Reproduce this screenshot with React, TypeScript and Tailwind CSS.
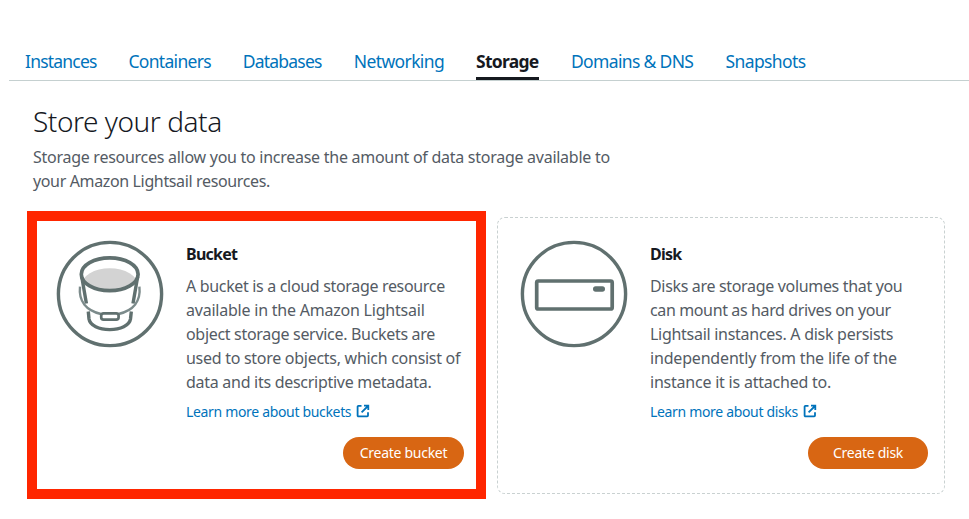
import type { ReactNode } from "react";

type Line = { text: string; tracking: string };

const tabs = [
  { label: "Instances", box: "w-[71.5px] tracking-[-0.8px]" },
  { label: "Containers", box: "w-[82.3px] tracking-[-0.7px]" },
  { label: "Databases", box: "w-[79px] tracking-[-0.8px]" },
  { label: "Networking", box: "w-[90.2px] tracking-[-0.62px]" },
  { label: "Storage", box: "w-[63px] tracking-[-0.72px]", active: true },
  { label: "Domains & DNS", box: "w-[122.6px] tracking-[-0.66px]" },
  { label: "Snapshots", box: "w-[80px] tracking-[-0.62px]" },
];

const bucketLines: Line[] = [
  { text: "A bucket is a cloud storage resource", tracking: "tracking-[-0.33px]" },
  { text: "available in the Amazon Lightsail", tracking: "tracking-[-0.22px]" },
  { text: "object storage service. Buckets are", tracking: "tracking-[-0.31px]" },
  { text: "used to store objects, which consist of", tracking: "tracking-[-0.28px]" },
  { text: "data and its descriptive metadata.", tracking: "tracking-[-0.28px]" },
];

const diskLines: Line[] = [
  { text: "Disks are storage volumes that you", tracking: "tracking-[-0.33px]" },
  { text: "can mount as hard drives on your", tracking: "tracking-[-0.37px]" },
  { text: "Lightsail instances. A disk persists", tracking: "tracking-[-0.28px]" },
  { text: "independently from the life of the", tracking: "tracking-[-0.18px]" },
  { text: "instance it is attached to.", tracking: "tracking-[-0.22px]" },
];

function ExternalIcon() {
  return (
    <svg className="size-[14px] shrink-0 -translate-y-px" viewBox="0 0 14 14" fill="none" stroke="currentColor" strokeWidth="1.8">
      <path d="M5.5 1.9H2.4a.8.8 0 0 0-.8.8v8.8a.8.8 0 0 0 .8.8h8.8a.8.8 0 0 0 .8-.8V8.3M8 1.7h4.3V6M12 2 5.6 8.4" />
    </svg>
  );
}

function BucketIcon() {
  return (
    <svg className="size-[108px] shrink-0" viewBox="0 0 108 108" fill="none" stroke="#60706f" strokeWidth="3.4">
      <clipPath id="rim">
        <ellipse cx="53.7" cy="34.3" rx="28.4" ry="16.7" />
      </clipPath>
      <circle cx="54" cy="54" r="51.6" />
      <ellipse cx="53.7" cy="45" rx="28" ry="16.7" fill="#d3d3d3" stroke="none" clipPath="url(#rim)" />
      <ellipse cx="53.7" cy="34.3" rx="28.4" ry="16.4" strokeWidth="3.7" />
      <path d="M25.8 37 30.4 63.5M81.6 37 77 63.5" />
      <path d="M32.3 71.5 33 79C34 85.5 43 89.6 53.7 89.6S73.500 85.5 74.500 79L75.300 71.500" />
      <path d="M24 46.7C22.5 61 30 70.5 45 74M83.4 46.7C85 61 77.5 70.5 62.5 74" stroke="#7c8b8b" strokeWidth="2.4" />
      <rect x="45.2" y="73.3" width="17.4" height="6.3" rx="2.4" fill="#fff" strokeWidth="2.7" />
    </svg>
  );
}

function DiskIcon() {
  return (
    <svg className="size-[108px] shrink-0" viewBox="0 0 108 108" fill="none" stroke="#60706f" strokeWidth="3.4">
      <circle cx="54" cy="54" r="51.6" />
      <rect x="16.7" y="41" width="75.5" height="28" rx="1.5" strokeWidth="3.7" />
      <rect x="73" y="46.3" width="12" height="5.4" rx="2.7" fill="#60706f" stroke="none" />
    </svg>
  );
}

type CardProps = {
  icon: ReactNode;
  title: string;
  lines: Line[];
  link: string;
  action: string;
  actionBox: string;
  highlighted?: boolean;
};

function ResourceCard({ icon, title, lines, link, action, actionBox, highlighted }: CardProps) {
  return (
    <article className="relative flex h-[277px] w-[448px] gap-[22px] rounded-lg border border-dashed border-[#c9d1d1] pl-[22px] pr-4 pt-[22px]">
      {icon}
      <div className="flex grow flex-col whitespace-nowrap pt-0.5">
        <h2 className="text-base leading-6 font-bold tracking-[-0.75px] text-[#16191f]">{title}</h2>
        <p className="mt-2 text-base leading-6 font-[450] text-[#545b64]">
          {lines.map((l) => (
            <span key={l.text} className={`block ${l.tracking}`}>{l.text}</span>
          ))}
        </p>
        <a className="mt-1.5 flex items-center gap-[5px] text-sm leading-6 font-[450] tracking-[-0.33px] text-[#0073bb]">
          {link}
          <ExternalIcon />
        </a>
        <button className={`mt-[13px] h-8 self-end rounded-full bg-[#d86613] text-sm tracking-[-0.28px] text-white ${actionBox}`}>
          {action}
        </button>
      </div>
      {highlighted && <div className="absolute -top-[7px] -left-[7px] h-[288px] w-[459px] border-10 border-[#ff2600]" />}
    </article>
  );
}

export default function App() {
  return (
    <main className="h-[519px] w-[969px] overflow-hidden bg-white pt-[49px] font-['Noto_Sans','Open_Sans',sans-serif]">
      <nav className="ml-[9px] flex h-8 gap-8 border-b border-[#c5d0d0] pl-4">
        {tabs.map((t) => (
          <a
            key={t.label}
            className={`h-[31px] shrink-0 text-[17.5px] leading-[25px] whitespace-nowrap ${t.box} ${
              t.active ? "border-b-3 border-[#16191f] font-bold text-[#16191f]" : "font-[450] text-[#0073bb]"
            }`}
          >
            {t.label}
          </a>
        ))}
      </nav>
      <header className="mt-[22px] ml-[33px] whitespace-nowrap">
        <h1 className="text-[28px] leading-9 font-light tracking-[-0.45px] text-[#16191f]">Store your data</h1>
        <p className="mt-1.5 text-base leading-6 font-[450] text-[#545b64]">
          <span className="block tracking-[-0.27px]">
            Storage resources allow you to increase the amount of data storage available to
          </span>
          <span className="block tracking-[-0.36px]">your Amazon Lightsail resources.</span>
        </p>
      </header>
      <section className="mt-6 ml-[33px] flex gap-4">
        <ResourceCard
          icon={<BucketIcon />}
          title="Bucket"
          lines={bucketLines}
          link="Learn more about buckets"
          action="Create bucket"
          actionBox="w-[121px]"
          highlighted
        />
        <ResourceCard
          icon={<DiskIcon />}
          title="Disk"
          lines={diskLines}
          link="Learn more about disks"
          action="Create disk"
          actionBox="w-[120px]"
        />
      </section>
    </main>
  );
}
